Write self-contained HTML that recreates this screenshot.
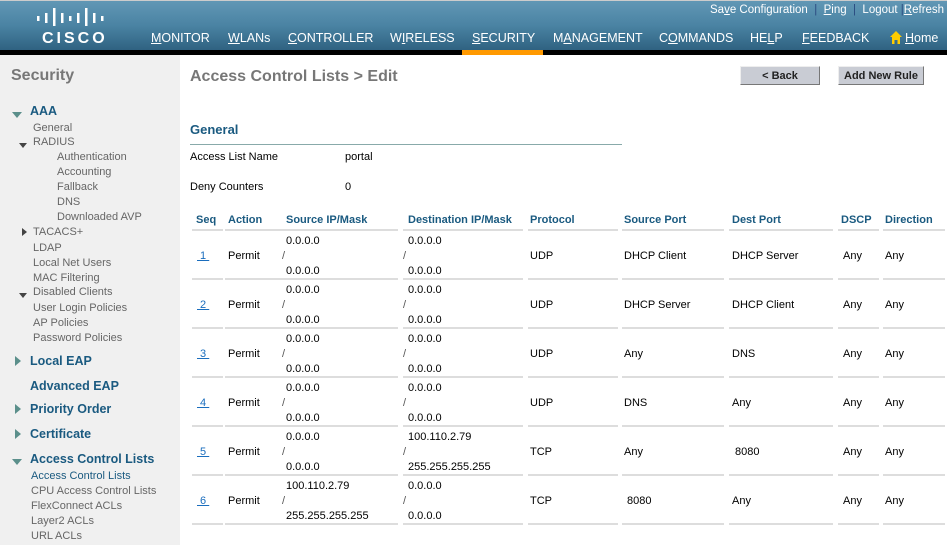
<!DOCTYPE html>
<html><head><meta charset="utf-8"><style>
*{margin:0;padding:0;box-sizing:border-box}
body{width:947px;height:545px;overflow:hidden;font-family:"Liberation Sans",sans-serif;background:#fff;position:relative;font-size:11px;color:#000}
.a{position:absolute;white-space:nowrap;margin-top:1px}
#hdr{position:absolute;left:0;top:0;width:947px;height:50px;background:linear-gradient(#6197b5,#4a83a3 50%,#2f6281);border-top:1px solid #ccc}
#blk{position:absolute;left:0;top:50px;width:947px;height:5px;background:#000}
#org{position:absolute;left:462px;top:50px;width:81px;height:5px;background:#f90}
.nav{color:#fff;font-size:12.5px;top:31px;margin-top:0}
.top{color:#fff;font-size:11.5px;top:4px;margin-top:0}
u{text-decoration:underline}
#side{position:absolute;left:0;top:55px;width:180px;height:490px;background:#f0f0f0}
.s{color:#666;font-size:11px}
.h{color:#1a5a80;font-weight:bold;font-size:12.5px}
.tri{position:absolute;width:0;height:0}
.td{border-left:5px solid transparent;border-right:5px solid transparent;border-top:6px solid #5b8f8b}
.tr{border-top:5px solid transparent;border-bottom:5px solid transparent;border-left:6px solid #5b8f8b}
.th{color:#1a5a80;font-weight:bold;font-size:11px;top:213px}
.line{position:absolute;height:2px;background:#ddd}
.lnk{color:#1a6dbd;text-decoration:underline}
.btn{position:absolute;top:66px;height:19px;background:#c9ccd4;border:1px solid #eee;border-right-color:#777;border-bottom-color:#777;font-weight:bold;font-size:11px;text-align:center;line-height:18px;color:#222}
</style></head><body>
<div id="hdr"></div><div id="blk"></div><div id="org"></div>
<svg class="a" style="left:36px;top:8px;margin-top:0" width="70" height="18"><g fill="#fff">
<rect x="1" y="8" width="2.5" height="5"/><rect x="9" y="5" width="2.5" height="10"/><rect x="17" y="0" width="2.5" height="18"/><rect x="25" y="5" width="2.5" height="10"/><rect x="33" y="8" width="2.5" height="5"/><rect x="41" y="5" width="2.5" height="10"/><rect x="49" y="0" width="2.5" height="18"/><rect x="57" y="5" width="2.5" height="10"/><rect x="65" y="8" width="2.5" height="5"/></g></svg>
<div class="a" style="left:42px;top:30px;margin-top:0;color:#fff;font-weight:bold;font-size:16px;letter-spacing:3px">CISCO</div>
<div class="a top" style="left:710px">Sa<u>v</u>e Configuration &nbsp;<span style="color:#2a4a80">|</span>&nbsp; <u>P</u>ing &nbsp;<span style="color:#2a4a80">|</span>&nbsp; Logout <span style="color:#2a4a80">|</span><u>R</u>efresh</div>
<div class="a nav" style="left:151px"><u>M</u>ONITOR</div>
<div class="a nav" style="left:228px"><u>W</u>LANs</div>
<div class="a nav" style="left:288px"><u>C</u>ONTROLLER</div>
<div class="a nav" style="left:390px">W<u>I</u>RELESS</div>
<div class="a nav" style="left:472px"><u>S</u>ECURITY</div>
<div class="a nav" style="left:553px">M<u>A</u>NAGEMENT</div>
<div class="a nav" style="left:659px">C<u>O</u>MMANDS</div>
<div class="a nav" style="left:750px">HE<u>L</u>P</div>
<div class="a nav" style="left:802px"><u>F</u>EEDBACK</div>
<svg class="a" style="left:890px;top:31px;margin-top:0" width="12" height="13"><path d="M6 0L12 6H10V13H7.5V9H4.5V13H2V6H0Z" fill="#fc0"/></svg>
<div class="a nav" style="left:905px"><u>H</u>ome</div>

<div id="side"></div>
<div class="a" style="left:11px;top:66px;color:#777;font-weight:bold;font-size:16px">Security</div>
<div class="tri td" style="left:12px;top:112px"></div><div class="a h" style="left:30px;top:103px">AAA</div>
<div class="a s" style="left:33px;top:121px">General</div>
<div class="tri td" style="left:19px;top:143px;border-top-color:#444;border-width:5px 4px 0"></div><div class="a s" style="left:33px;top:135px">RADIUS</div>
<div class="a s" style="left:57px;top:150px">Authentication</div>
<div class="a s" style="left:57px;top:165px">Accounting</div>
<div class="a s" style="left:57px;top:180px">Fallback</div>
<div class="a s" style="left:57px;top:195px">DNS</div>
<div class="a s" style="left:57px;top:210px">Downloaded AVP</div>
<div class="tri tr" style="left:22px;top:228px;border-left-color:#444;border-width:4px 0 4px 5px"></div><div class="a s" style="left:33px;top:225px">TACACS+</div>
<div class="a s" style="left:33px;top:241px">LDAP</div>
<div class="a s" style="left:33px;top:256px">Local Net Users</div>
<div class="a s" style="left:33px;top:271px">MAC Filtering</div>
<div class="tri td" style="left:19px;top:293px;border-top-color:#444;border-width:5px 4px 0"></div><div class="a s" style="left:33px;top:285px">Disabled Clients</div>
<div class="a s" style="left:33px;top:301px">User Login Policies</div>
<div class="a s" style="left:33px;top:316px">AP Policies</div>
<div class="a s" style="left:33px;top:331px">Password Policies</div>
<div class="tri tr" style="left:15px;top:356px"></div><div class="a h" style="left:30px;top:353px">Local EAP</div>
<div class="a h" style="left:30px;top:378px">Advanced EAP</div>
<div class="tri tr" style="left:15px;top:404px"></div><div class="a h" style="left:30px;top:401px">Priority Order</div>
<div class="tri tr" style="left:15px;top:429px"></div><div class="a h" style="left:30px;top:426px">Certificate</div>
<div class="tri td" style="left:12px;top:459px"></div><div class="a h" style="left:30px;top:451px">Access Control Lists</div>
<div class="a s" style="left:31px;top:469px;color:#1a5a80">Access Control Lists</div>
<div class="a s" style="left:31px;top:484px">CPU Access Control Lists</div>
<div class="a s" style="left:31px;top:499px">FlexConnect ACLs</div>
<div class="a s" style="left:31px;top:514px">Layer2 ACLs</div>
<div class="a s" style="left:31px;top:529px">URL ACLs</div>

<div class="a" style="left:190px;top:67px;color:#777;font-weight:bold;font-size:16px">Access Control Lists &gt; Edit</div>
<div class="btn" style="left:740px;width:80px">&lt; Back</div>
<div class="btn" style="left:838px;width:86px">Add New Rule</div>
<div class="a" style="left:190px;top:121px;color:#1a5a80;font-weight:bold;font-size:13px">General</div>
<div class="a" style="left:190px;top:144px;width:432px;height:1px;background:#8aa;margin-top:0"></div>
<div class="a" style="left:190px;top:150px">Access List Name</div><div class="a" style="left:345px;top:150px">portal</div>
<div class="a" style="left:190px;top:180px">Deny Counters</div><div class="a" style="left:345px;top:180px">0</div>

<div class="a th" style="left:196px">Seq</div><div class="a th" style="left:228px">Action</div><div class="a th" style="left:286px">Source IP/Mask</div><div class="a th" style="left:408px">Destination IP/Mask</div><div class="a th" style="left:530px">Protocol</div><div class="a th" style="left:624px">Source Port</div><div class="a th" style="left:732px">Dest Port</div><div class="a th" style="left:841px">DSCP</div><div class="a th" style="left:885px">Direction</div>
<div id="rows"></div>
<script>
var R=[["1","0.0.0.0","0.0.0.0","0.0.0.0","0.0.0.0","UDP","DHCP Client","DHCP Server"],
["2","0.0.0.0","0.0.0.0","0.0.0.0","0.0.0.0","UDP","DHCP Server","DHCP Client"],
["3","0.0.0.0","0.0.0.0","0.0.0.0","0.0.0.0","UDP","Any","DNS"],
["4","0.0.0.0","0.0.0.0","0.0.0.0","0.0.0.0","UDP","DNS","Any"],
["5","0.0.0.0","0.0.0.0","100.110.2.79","255.255.255.255","TCP","Any"," 8080"],
["6","100.110.2.79","255.255.255.255","0.0.0.0","0.0.0.0","TCP"," 8080","Any"]];
var h="",cols=[[192,33],[225,74],[282,118],[403,122],[528,92],[622,104],[729,106],[838,43],[883,64]];
function ln(y){cols.forEach(function(c){h+='<div class="line" style="left:'+c[0]+'px;top:'+y+'px;width:'+(c[1]-2)+'px"></div>'})}
ln(229);
R.forEach(function(r,i){var y=231+i*49;
h+='<div class="a lnk" style="left:197px;top:'+(y+18)+'px">&nbsp;'+r[0]+'&nbsp;</div>';
h+='<div class="a" style="left:228px;top:'+(y+18)+'px">Permit</div>';
h+='<div class="a" style="left:286px;top:'+(y+3)+'px">'+r[1]+'</div><div class="a" style="left:282px;top:'+(y+18)+'px;color:#555">/</div><div class="a" style="left:286px;top:'+(y+33)+'px">'+r[2]+'</div>';
h+='<div class="a" style="left:408px;top:'+(y+3)+'px">'+r[3]+'</div><div class="a" style="left:403px;top:'+(y+18)+'px;color:#555">/</div><div class="a" style="left:408px;top:'+(y+33)+'px">'+r[4]+'</div>';
h+='<div class="a" style="left:530px;top:'+(y+18)+'px">'+r[5]+'</div><div class="a" style="left:624px;top:'+(y+18)+'px;white-space:pre">'+r[6]+'</div><div class="a" style="left:732px;top:'+(y+18)+'px;white-space:pre">'+r[7]+'</div><div class="a" style="left:843px;top:'+(y+18)+'px">Any</div><div class="a" style="left:885px;top:'+(y+18)+'px">Any</div>';
ln(y+47);});
document.getElementById("rows").innerHTML=h;
</script>
</body></html>
